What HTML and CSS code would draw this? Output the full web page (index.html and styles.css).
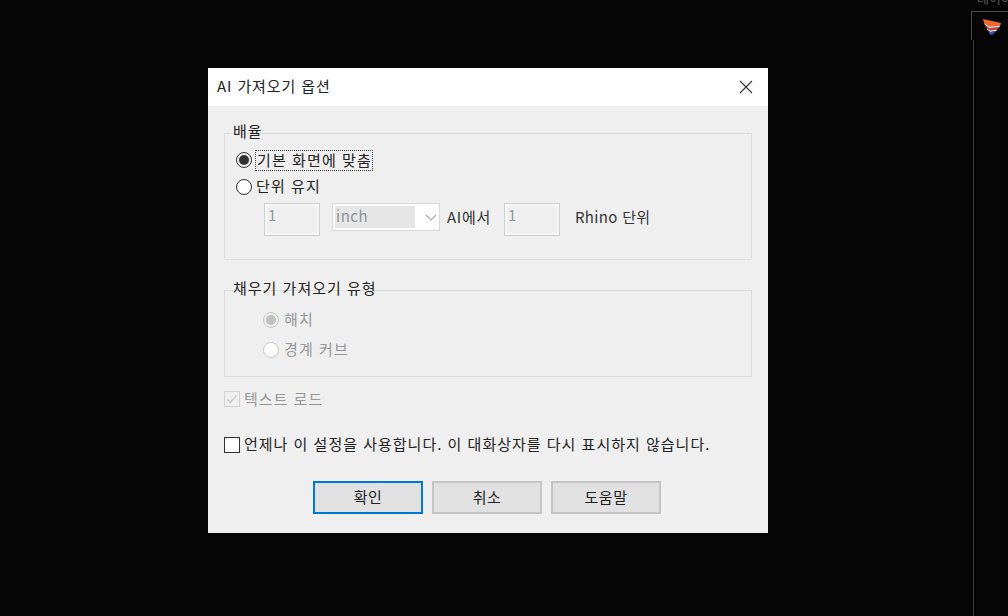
FILE: index.html
```html
<!DOCTYPE html>
<html lang="ko">
<head>
<meta charset="utf-8">
<title>AI 가져오기 옵션</title>
<link rel="stylesheet" href="styles.css">
</head>
<body>
<div class="panel-label">레이어</div>
<div class="panel-tab">
  <svg class="logo" width="18" height="18" viewBox="0 0 18 18">
    <path d="M0 1 L18 5 L17 8 L6 8.5 L1 5 Z" fill="#f0682c"/>
    <path d="M1 5 L6 8.5 L17 8 L16 9.5 L6 10 L2 7 Z" fill="#f6f6f6"/>
    <path d="M2 7 L6 10 L16 9.5 L14.5 11.5 L7 12.5 L3.5 10 Z" fill="#d8392c"/>
    <path d="M3.5 10 L7 12.5 L14.5 11.5 L13.5 12.8 L7.5 14 L4.5 12 Z" fill="#f2f2f2"/>
    <path d="M4.5 12 L7.5 14 L13.5 12.8 L9 17 L7 16.5 Z" fill="#3656b0"/>
  </svg>
</div>
<div class="side-panel"></div>
<div class="dialog">
  <header class="titlebar">
    <span class="title">AI 가져오기 옵션</span>
    <svg class="close" width="14" height="14" viewBox="0 0 14 14"><path d="M1 1 L13 13 M13 1 L1 13" stroke="#333" stroke-width="1.1" fill="none"/></svg>
  </header>
  <div class="body">
    <section class="group group-scale">
      <div class="legend">배율</div>
      <label class="option first"><span class="radio on"></span><span class="focus">기본 화면에 맞춤</span></label>
      <label class="option second"><span class="radio"></span><span class="txt">단위 유지</span></label>
      <div class="units">
        <div class="input">1</div>
        <div class="select"><span class="select-val">inch</span><svg class="chev" width="12" height="7" viewBox="0 0 12 7"><path d="M1 1 L6 6 L11 1" stroke="#a8a8a8" stroke-width="1.1" fill="none"/></svg></div>
        <span class="u-label">AI에서</span>
        <div class="input">1</div>
        <span class="u-label rhino">Rhino 단위</span>
      </div>
    </section>
    <section class="group group-fill">
      <div class="legend">채우기 가져오기 유형</div>
      <label class="option dis"><span class="radio off-on"></span><span class="txt">해치</span></label>
      <label class="option dis"><span class="radio off"></span><span class="txt">경계 커브</span></label>
    </section>
    <label class="check-row dis text-load">
      <span class="box box-dis"><svg width="14" height="14" viewBox="0 0 14 14"><path d="M2.5 7.5 L5.5 10.5 L11.5 3" stroke="#c4c4c4" stroke-width="1.2" fill="none"/></svg></span>
      <span class="txt">텍스트 로드</span>
    </label>
    <label class="check-row always">
      <span class="box"></span>
      <span class="txt">언제나 이 설정을 사용합니다. 이 대화상자를 다시 표시하지 않습니다.</span>
    </label>
    <div class="buttons">
      <button class="btn primary">확인</button>
      <button class="btn">취소</button>
      <button class="btn">도움말</button>
    </div>
  </div>
</div>
</body>
</html>
```

FILE: styles.css
```css
* { box-sizing: border-box; }
html, body { margin: 0; height: 100%; }
body {
  background: #050505;
  font-family: "Noto Sans CJK KR", "Noto Sans", sans-serif;
  font-size: 15px;
  color: #222;
  overflow: hidden;
  position: relative;
}
.panel-label {
  position: absolute; left: 977px; top: -10px;
  color: #555; font-size: 13px; line-height: 16px; white-space: nowrap;
}
.panel-tab {
  position: absolute; left: 971px; top: 11px; right: 0; height: 29px;
  border-top: 1px solid #4a4a4a; border-left: 1px solid #4a4a4a;
}
.side-panel {
  position: absolute; left: 973px; top: 40px; bottom: 0; width: 1px;
  background: #3a3a3a;
}
.logo { position: absolute; left: 11px; top: 6px; }
.dialog {
  position: absolute; left: 208px; top: 68px;
  width: 560px; height: 465px;
  background: #efefef;
}
.titlebar {
  height: 38px; background: #fff;
  display: flex; align-items: center; justify-content: space-between;
  padding: 0 15px 0 9px;
}
.title { font-size: 15px; color: #222; letter-spacing: .9px; padding-bottom: 4px; }
.body { padding: 27px 16px 0; display: flex; flex-direction: column; }
.group { border: 1px solid #dcdcdc; position: relative; }
.group-scale { height: 127px; padding: 15px 11px 0; }
.group-fill { height: 87px; margin-top: 30px; padding: 18px 38px 0; display: flex; flex-direction: column; gap: 8px; }
.legend {
  position: absolute; left: 4px; top: -13px; padding: 0 4px 3px;
  background: linear-gradient(transparent 13px, #efefef 13px); line-height: 20px; letter-spacing: 1px;
}
.option { display: flex; align-items: center; height: 22px; gap: 4px; letter-spacing: 1.1px; }
.option.dis { gap: 5px; }
.option.second { margin-top: 5px; }
.txt { padding-bottom: 3px; }
.radio {
  width: 16px; height: 16px; border-radius: 50%;
  border: 1px solid #333; background: #fff; flex: none; position: relative;
}
.radio.on { border-color: #333; background: #efefef; }
.radio.on::after {
  content: ""; position: absolute; inset: 2px; border-radius: 50%; background: #333;
}
.radio.off-on, .radio.off { border-color: #c8c8c8; }
.radio.off-on { background: #efefef; }
.radio.off-on::after {
  content: ""; position: absolute; inset: 2px; border-radius: 50%; background: #c0c0c0;
}
.focus { border: 1px dotted #444; line-height: 17px; height: 21px; padding: 0 0 0 1px; margin-left: -1px; white-space: nowrap; }
.units { display: flex; align-items: flex-start; margin: 5px 0 0 28px; }
.input {
  width: 56px; height: 33px; border: 1px solid #cfcfcf; background: #efefef;
  color: #969696; font-size: 15px; padding: 0 0 0 3px; line-height: 22px;
  box-shadow: inset 0 0 0 2px #f7f7f7;
}
.select {
  width: 108px; height: 28px; margin: 0 7px 0 12px; border: 1px solid #d8d8d8; background: #fff;
  display: flex; align-items: center; padding: 2px;
  position: relative;
}
.select-val {
  flex: 1; height: 100%; background: #e6e6e6; color: #909090; line-height: 20px; padding-left: 1px;
  margin-right: 22px; letter-spacing: .5px;
}
.chev { position: absolute; right: 2px; top: 10px; }
.u-label { letter-spacing: .7px; white-space: nowrap; margin-right: 13px; line-height: 27px; color: #333; }
.u-label.rhino { margin: 0 0 0 15px; letter-spacing: .35px; }
.dis .txt { color: #969696; }
.check-row { display: flex; align-items: center; gap: 4px; letter-spacing: 1px; white-space: nowrap; }
.text-load { margin-top: 11px; height: 22px; }
.text-load .txt { padding-bottom: 1px; }
.always { margin-top: 24px; height: 22px; }
.box { width: 16px; height: 16px; border: 1px solid #333; background: #fff; flex: none; display: flex; }
.box-dis { border-color: #d2d2d2; background: #efefef; }
.buttons { display: flex; gap: 9px; margin-top: 25px; padding-left: 89px; }
.btn {
  width: 110px; height: 33px; padding: 0 0 3px; font: inherit; color: #222;
  background: #e1e1e1; border: 2px solid #c4c4c4; letter-spacing: .5px;
}
.btn.primary { border-color: #0078d7; }
```
